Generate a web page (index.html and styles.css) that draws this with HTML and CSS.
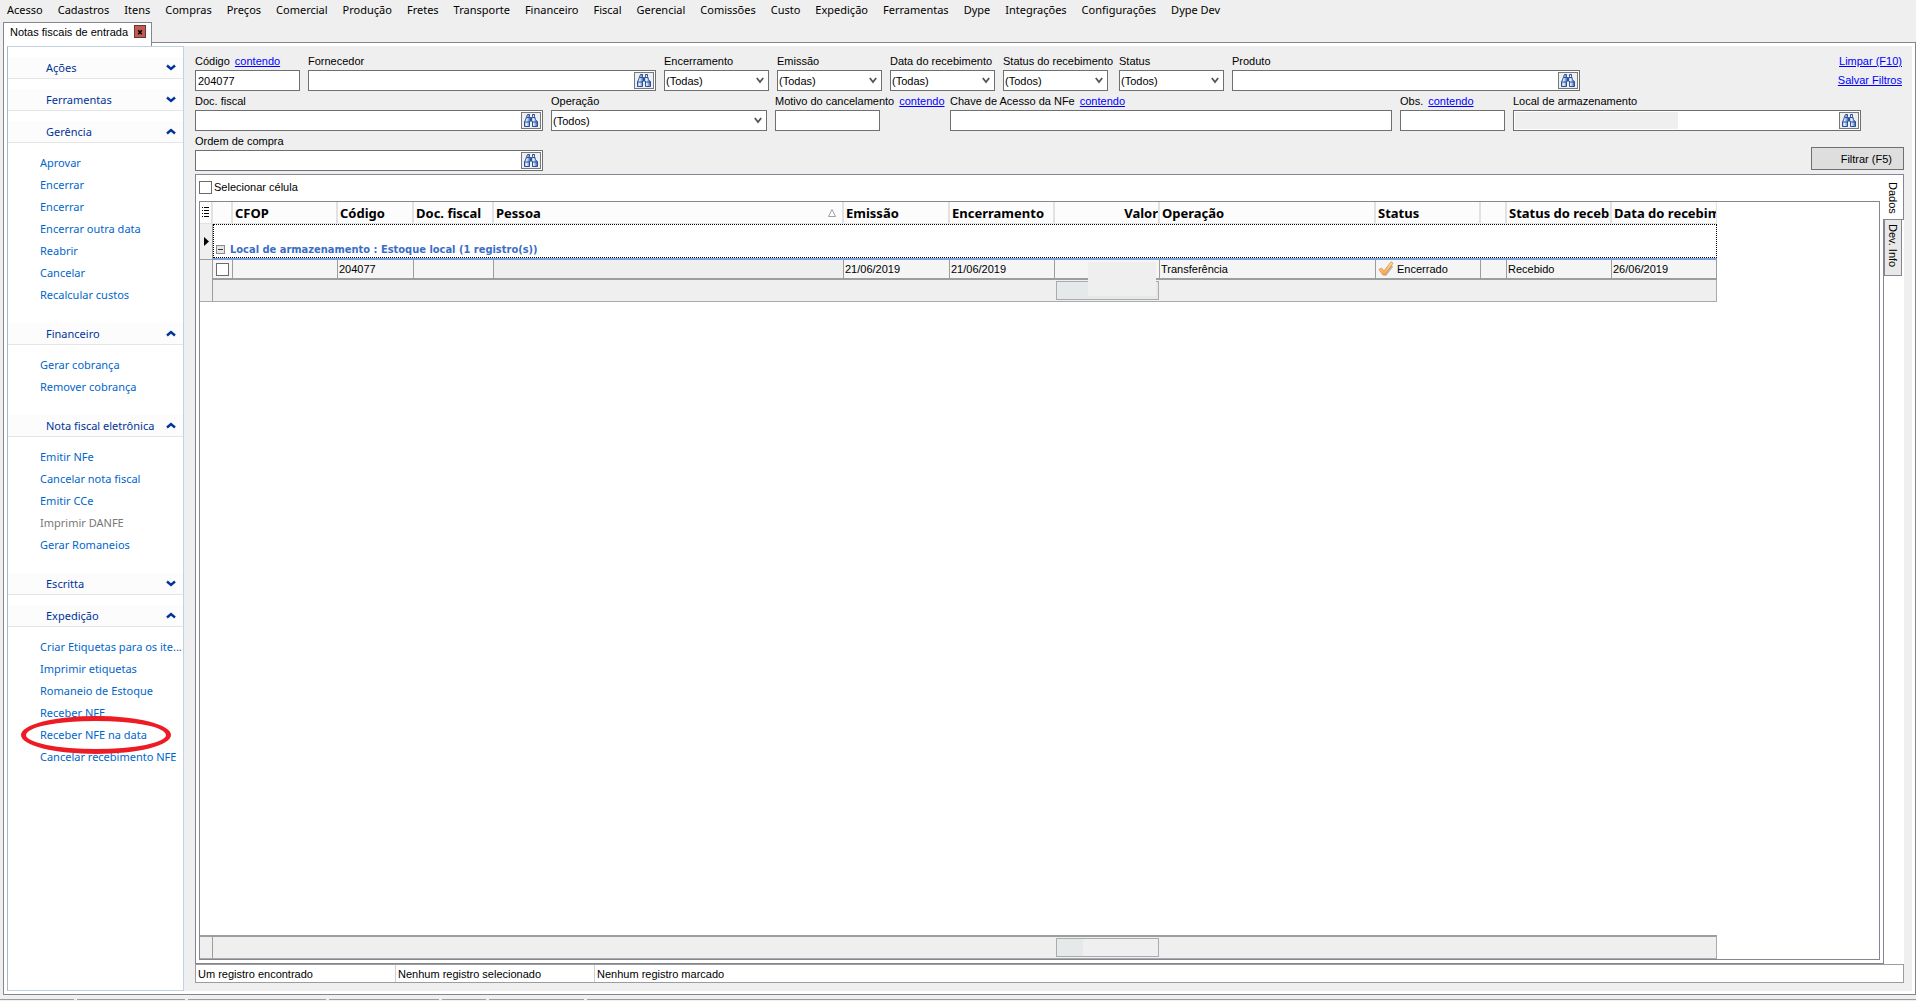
FILE: index.html
```html
<!DOCTYPE html>
<html lang="pt-BR">
<head>
<meta charset="utf-8">
<title>Notas fiscais de entrada</title>
<link rel="stylesheet" href="styles.css">
</head>
<body>
<svg class="defs" aria-hidden="true">
  <defs>
    <linearGradient id="lens" x1="0" x2="1"><stop offset="0" stop-color="#8fb0e0"/><stop offset=".35" stop-color="#e8f1fc"/><stop offset="1" stop-color="#2f5cab"/></linearGradient>
    <linearGradient id="gold" x1="0" y1="0" x2="0" y2="1"><stop offset="0" stop-color="#ffe2a8"/><stop offset="1" stop-color="#f9a24a"/></linearGradient>
  </defs>
  <symbol id="binoculars" viewBox="0 0 16 15">
    <path d="M6 5.500h4v3H6z" fill="#2a4b8d"/>
    <path d="M4.500 1.500h2v2l1 1v3l-1 1v5h-5v-5l1-1.500 1-3z" fill="url(#lens)" stroke="#29509b"/>
    <path d="M9.500 1.500h2v2l1 3 1 1.500 1 .5v5h-5v-5l-1-1v-3l1-1z" fill="url(#lens)" stroke="#29509b"/>
    <path d="M4 4.500h3M9 4.500h3M2 9h5M9 9h5" stroke="#29509b" fill="none"/>
  </symbol>
  <symbol id="down" viewBox="0 0 10 7"><path d="M1 1.500l4 3.500 4-3.500" fill="none" stroke="currentColor" stroke-width="2.400"/></symbol>
  <symbol id="up" viewBox="0 0 10 7"><path d="M1 5.500l4-3.500 4 3.500" fill="none" stroke="currentColor" stroke-width="2.400"/></symbol>
  <symbol id="arrow" viewBox="0 0 8 7"><path d="M.8 1l3.200 4 3.200-4" fill="none" stroke="#555" stroke-width="1.800"/></symbol>
</svg>

<nav class="menu">
  <a href="#">Acesso</a><a href="#">Cadastros</a><a href="#">Itens</a><a href="#">Compras</a><a href="#">Preços</a><a href="#">Comercial</a><a href="#">Produção</a><a href="#">Fretes</a><a href="#">Transporte</a><a href="#">Financeiro</a><a href="#">Fiscal</a><a href="#">Gerencial</a><a href="#">Comissões</a><a href="#">Custo</a><a href="#">Expedição</a><a href="#">Ferramentas</a><a href="#">Dype</a><a href="#">Integrações</a><a href="#">Configurações</a><a href="#">Dype Dev</a>
</nav>

<div class="tabs">
  <div class="tab">Notas fiscais de entrada <button class="close" aria-label="Fechar"><svg viewBox="0 0 11 11"><path d="M3.500 3.500l4 4.500M7.500 3.500l-4 4.500" stroke="#000" stroke-width="1.600"/></svg></button></div>
</div>

<div class="pane">
  <aside class="side">
    <section><button class="head">Ações<svg><use href="#down"/></svg></button></section>
    <section><button class="head">Ferramentas<svg><use href="#down"/></svg></button></section>
    <section><button class="head">Gerência<svg><use href="#up"/></svg></button>
      <div class="links"><a href="#">Aprovar</a><a href="#">Encerrar</a><a href="#">Encerrar</a><a href="#">Encerrar outra data</a><a href="#">Reabrir</a><a href="#">Cancelar</a><a href="#">Recalcular custos</a></div></section>
    <section><button class="head">Financeiro<svg><use href="#up"/></svg></button>
      <div class="links"><a href="#">Gerar cobrança</a><a href="#">Remover cobrança</a></div></section>
    <section><button class="head">Nota fiscal eletrônica<svg><use href="#up"/></svg></button>
      <div class="links"><a href="#">Emitir NFe</a><a href="#">Cancelar nota fiscal</a><a href="#">Emitir CCe</a><a href="#" class="off">Imprimir DANFE</a><a href="#">Gerar Romaneios</a></div></section>
    <section><button class="head">Escritta<svg><use href="#down"/></svg></button></section>
    <section><button class="head">Expedição<svg><use href="#up"/></svg></button>
      <div class="links"><a href="#">Criar Etiquetas para os ite...</a><a href="#">Imprimir etiquetas</a><a href="#">Romaneio de Estoque</a><a href="#">Receber NFE</a><a href="#" class="marked">Receber NFE na data<span class="ring"></span></a><a href="#">Cancelar recebimento NFE</a></div></section>
  </aside>

  <main class="work">
    <form class="filters">
      <div class="rows">
        <div class="row">
          <div class="field small"><div class="cap"><label for="cod">Código</label><a href="#">contendo</a></div><input class="box" id="cod" value="204077"></div>
          <div class="field wide"><div class="cap"><label for="forn">Fornecedor</label></div><div class="box"><input id="forn"><button type="button" aria-label="Buscar"><svg><use href="#binoculars"/></svg></button></div></div>
          <div class="field small"><div class="cap"><label for="enc">Encerramento</label></div><div class="box"><select id="enc"><option>(Todas)</option></select><svg class="arrow"><use href="#arrow"/></svg></div></div>
          <div class="field small"><div class="cap"><label for="emi">Emissão</label></div><div class="box"><select id="emi"><option>(Todas)</option></select><svg class="arrow"><use href="#arrow"/></svg></div></div>
          <div class="field small"><div class="cap"><label for="rec">Data do recebimento</label></div><div class="box"><select id="rec"><option>(Todas)</option></select><svg class="arrow"><use href="#arrow"/></svg></div></div>
          <div class="field small long-cap"><div class="cap"><label for="srec">Status do recebimento</label></div><div class="box"><select id="srec"><option>(Todos)</option></select><svg class="arrow"><use href="#arrow"/></svg></div></div>
          <div class="field small"><div class="cap"><label for="sta">Status</label></div><div class="box"><select id="sta"><option>(Todos)</option></select><svg class="arrow"><use href="#arrow"/></svg></div></div>
          <div class="field wide"><div class="cap"><label for="prod">Produto</label></div><div class="box"><input id="prod"><button type="button" aria-label="Buscar"><svg><use href="#binoculars"/></svg></button></div></div>
        </div>
        <div class="row">
          <div class="field wide"><div class="cap"><label for="doc">Doc. fiscal</label></div><div class="box"><input id="doc"><button type="button" aria-label="Buscar"><svg><use href="#binoculars"/></svg></button></div></div>
          <div class="field mid"><div class="cap"><label for="ope">Operação</label></div><div class="box"><select id="ope"><option>(Todos)</option></select><svg class="arrow"><use href="#arrow"/></svg></div></div>
          <div class="field small linked-cap"><div class="cap"><label for="mot">Motivo do cancelamento</label><a href="#">contendo</a></div><input class="box" id="mot"></div>
          <div class="field key"><div class="cap"><label for="cha">Chave de Acesso da NFe</label><a href="#">contendo</a></div><input class="box" id="cha"></div>
          <div class="field small"><div class="cap"><label for="obs">Obs.</label><a href="#">contendo</a></div><input class="box" id="obs"></div>
          <div class="field wide"><div class="cap"><label for="loc">Local de armazenamento</label></div><div class="box"><span class="filled"></span><input id="loc"><button type="button" aria-label="Buscar"><svg><use href="#binoculars"/></svg></button></div></div>
        </div>
        <div class="row">
          <div class="field wide"><div class="cap"><label for="ord">Ordem de compra</label></div><div class="box"><input id="ord"><button type="button" aria-label="Buscar"><svg><use href="#binoculars"/></svg></button></div></div>
        </div>
      </div>
      <div class="actions">
        <a href="#">Limpar (F10)</a>
        <a href="#">Salvar Filtros</a>
        <button type="button" class="filter">Filtrar (F5)</button>
      </div>
    </form>

    <div class="result">
      <div class="sheet">
        <label class="pick"><input type="checkbox"> Selecionar célula</label>
        <div class="grid">
          <table class="data">
            <colgroup><col class="c13"><col class="c20"><col class="c105"><col class="c76"><col class="c80"><col class="c350"><col class="c106"><col class="c105"><col class="c105"><col class="c216"><col class="c105"><col class="c26"><col class="c105"><col class="c105"></colgroup>
            <thead><tr>
              <th><svg class="list" viewBox="0 0 7 11"><path d="M2 .5h5M2 3.500h5M2 6.500h5M2 9.500h5M0 .5h1M0 3.500h1M0 6.500h1M0 9.500h1" stroke="#000"/></svg></th>
              <th></th><th>CFOP</th><th>Código</th><th>Doc. fiscal</th>
              <th><div class="sorted">Pessoa<svg viewBox="0 0 8 8"><path d="M4 .5L7.500 7.500H.5z" fill="none" stroke="#a0a0a0"/></svg></div></th>
              <th>Emissão</th><th>Encerramento</th><th class="num">Valor</th><th>Operação</th><th>Status</th><th></th><th>Status do recebimento</th><th>Data do recebimento</th>
            </tr></thead>
            <tbody>
              <tr class="group"><td class="mark"><svg viewBox="0 0 5 9"><path d="M0 0l5 4.500L0 9z"/></svg></td><td colspan="13"><div class="band"><button class="fold" aria-label="Recolher"></button>Local de armazenamento : Estoque local (1 registro(s))</div></td></tr>
              <tr class="item"><td class="mark"></td><td class="tick"><input type="checkbox" aria-label="Marcar"></td><td></td><td>204077</td><td></td><td class="dim"></td><td>21/06/2019</td><td>21/06/2019</td><td class="value"><span class="cover"></span></td><td>Transferência</td>
                <td><div class="state"><svg viewBox="0 0 16 16"><path d="M4 13l4 2 7-9-1-2z" fill="#b9b9b9"/><path d="M1 8.500L3.500 7l2.500 3L13 .8l2 1.400L7 14H5z" fill="url(#gold)" stroke="#e08a3c" stroke-width=".8"/></svg>Encerrado</div></td><td></td><td>Recebido</td><td>26/06/2019</td></tr>
            </tbody>
            <tfoot><tr><td class="mark"></td><td colspan="7"></td><td class="sum"><div></div></td><td colspan="5"></td></tr></tfoot>
          </table>
          <table class="data totals">
            <colgroup><col class="c13"><col class="c842"><col class="c105"><col class="c557"></colgroup>
            <tfoot><tr><td class="mark"></td><td></td><td class="sum"><div class="part"></div></td><td></td></tr></tfoot>
          </table>
        </div>
      </div>
      <div class="sidetabs"><button class="on">Dados</button><button>Dev. Info</button></div>
    </div>
    <div class="status"><span>Um registro encontrado</span><span>Nenhum registro selecionado</span><span>Nenhum registro marcado</span></div>
  </main>
</div>
<footer class="panels"><i class="p74"></i><i class="p108"></i><i class="p138"></i><i class="p110"></i><i class="p44"></i><i class="p95"></i><i class="rest"></i></footer>
</body>
</html>
```
FILE: styles.css
```css
* { box-sizing: border-box; }

body {
  margin: 0;
  height: 100vh;
  display: flex;
  flex-direction: column;
  background: #efefef;
  color: #000;
  font: 11px/16px "Liberation Sans", Arial, sans-serif;
  overflow: hidden;
}

button, input, select {
  font: inherit;
  color: inherit;
  margin: 0;
  padding: 0;
  border: 0;
  border-radius: 0;
  background: none;
}

svg { display: block; }
.defs { position: absolute; width: 0; height: 0; }
input:focus, select:focus { outline: 0; }

/* Menu bar and document tabs */
.menu {
  display: flex;
  gap: 15px;
  height: 22px;
  padding: 2px 7px;
  font: 11px/16px "Noto Sans", "Segoe UI", sans-serif;
  white-space: nowrap;
}
.menu a { color: #000; text-decoration: none; }

.tabs { padding-left: 3px; display: flex; height: 20px; }
.tab {
  display: flex;
  align-items: center;
  justify-content: space-between;
  gap: 6px;
  width: 149px;
  height: 24px;
  padding: 0 5px 6px 6px;
  border: 1px solid #868692;
  border-bottom: 0;
  background: #fff;
  white-space: nowrap;
  z-index: 1;
}
.close { width: 13px; height: 13px; border: 1px solid #5e3d38; background: #c65a50; }

.pane {
  flex: 1;
  min-height: 0;
  display: flex;
  margin-left: 3px;
  border: 1px solid #868692;
  padding: 3px;
  background: #efefef;
  box-shadow: inset 0 0 0 3px #fff;
}

/* Task sidebar */
.side {
  flex: none;
  width: 177px;
  padding-top: 10px;
  border: 1px solid #c3d2de;
  border-left-color: #a9b8c6;
  background: #fff;
  font: 11px/22px "Noto Sans", "Segoe UI", sans-serif;
  white-space: nowrap;
}
.side section { margin-bottom: 10px; }
.head {
  display: flex;
  align-items: center;
  justify-content: space-between;
  width: 100%;
  height: 22px;
  padding: 0 7px 0 38px;
  border-bottom: 1px solid #e5e5e5;
  background: #fcfcfc;
  color: #003399;
}
.head svg { width: 10px; height: 7px; }
.links { padding: 9px 0 7px 32px; }
.links a { display: block; height: 22px; color: #0066cc; text-decoration: none; }
.links .off { color: #777; }
.marked { position: relative; }
.ring {
  position: absolute;
  left: -19px;
  top: -8px;
  width: 150px;
  height: 38px;
  border: 5px solid #ed1c24;
  border-radius: 50%;
}

/* Filters */
.work { flex: 1; min-width: 0; display: flex; flex-direction: column; padding: 7px 8px 8px 11px; }
.filters { display: flex; height: 121px; }
.rows { flex: 1; min-width: 0; display: flex; flex-direction: column; gap: 2px; }
.row { display: flex; gap: 8px; }
.field { flex: none; }
.cap { display: flex; gap: 5px; height: 17px; white-space: nowrap; }
.cap a, .actions a { color: #0000ff; }
.box {
  display: flex;
  align-items: center;
  position: relative;
  width: 100%;
  height: 21px;
  border: 1px solid #6f6f6f;
  background: #fff;
}
input.box { display: block; padding: 0 2px; }
.small { width: 105px; }
.small .box { width: 105px; }
.long-cap { width: 108px; }
.linked-cap { width: 167px; }
.wide { width: 348px; }
.mid { width: 216px; }
.key { width: 442px; }
.box > input { flex: 1; min-width: 0; height: 17px; padding: 0 2px; }
.box > button {
  display: grid;
  place-items: center;
  width: 20px;
  height: 17px;
  margin-right: 1px;
  border: 1px solid #77777f;
  background: #efefef;
}
.box > button svg { width: 16px; height: 15px; }
.box select { flex: 1; height: 19px; padding: 0 1px; appearance: none; }
.arrow { width: 8px; height: 7px; position: absolute; right: 4px; top: 6px; pointer-events: none; }
.filled { width: 163px; height: 17px; margin-left: 1px; background: #efefef; }
.actions { flex: none; display: flex; flex-direction: column; align-items: flex-end; gap: 3px; }
.actions a { margin-right: 2px; }
.filter {
  width: 93px;
  height: 23px;
  margin-top: 56px;
  padding-right: 11px;
  border: 1px solid #707070;
  background: #dedede;
  text-align: right;
}

/* Result sheet */
.result { flex: 1; min-height: 0; display: flex; background: #fff; }
.sheet {
  flex: 1;
  min-width: 0;
  display: flex;
  flex-direction: column;
  padding: 0 3px 3px;
  border: 1px solid #868692;
}
.pick { display: flex; align-items: center; gap: 2px; height: 26px; padding-bottom: 2px; }
input[type="checkbox"] { appearance: none; width: 13px; height: 13px; border: 1px solid #6b6b6b; background: #fff; }
.grid {
  flex: 1;
  display: flex;
  flex-direction: column;
  justify-content: space-between;
  overflow: hidden;
  border: 1px solid #868692;
}
.data { width: 1517px; table-layout: fixed; border-collapse: separate; border-spacing: 0; }
.c13 { width: 13px; }
.c20 { width: 20px; }
.c26 { width: 26px; }
.c76 { width: 76px; }
.c80 { width: 80px; }
.c105 { width: 105px; }
.c106 { width: 106px; }
.c216 { width: 216px; }
.c350 { width: 350px; }
.c842 { width: 842px; }
.c557 { width: 557px; }
.data th {
  height: 22px;
  padding: 0 2px;
  border-right: 2px solid #e2e2e2;
  border-bottom: 1px solid #e2e2e2;
  background: #fcfcfc;
  font: bold 13px/20px "Noto Sans", Tahoma, sans-serif;
  text-align: left;
  white-space: nowrap;
  overflow: hidden;
}
.data th:last-child { border-right-width: 1px; }
.data th.num { padding-right: 0; text-align: right; }
.list { width: 7px; height: 11px; }
.sorted { display: flex; align-items: center; justify-content: space-between; padding-right: 4px; }
.sorted svg { width: 8px; height: 8px; }
.data td { padding: 0 1px; white-space: nowrap; }
.data .mark { border-right: 1px solid #9d9d9d; background: #efefef; }
.group td { height: 36px; border-bottom: 2px solid #7a9fdb; }
.group td:last-child { padding: 0; }
.group .mark { padding-left: 4px; border-bottom: 1px solid #9d9d9d; }
.mark svg { width: 5px; height: 9px; }
.band {
  display: flex;
  align-items: flex-end;
  gap: 5px;
  height: 34px;
  padding-left: 2px;
  border: 1px dotted #000;
  color: #3a6dc4;
  font: bold 11px/14px "DejaVu Sans Condensed", Tahoma, sans-serif;
}
.fold {
  width: 9px;
  height: 9px;
  margin-bottom: 3px;
  border: 1px solid #8a8a8a;
  background: linear-gradient(#333, #333) center / 5px 1px no-repeat #e6e6e6;
}
.item td { height: 20px; border-right: 1px solid #9d9d9d; border-bottom: 2px solid #9d9d9d; background: #f5f5f5; }
.item .mark { border-bottom: 0; }
.item .dim { background: #efefef; }
.item .tick { padding-left: 3px; }
.tick input { display: block; }
.value { position: relative; }
.cover { position: absolute; left: 33px; top: 2px; width: 68px; height: 34px; background: #efefef; z-index: 1; }
.state { display: flex; align-items: center; gap: 3px; padding-left: 1px; }
.state svg { width: 16px; height: 16px; }
.data tfoot td { height: 22px; border-bottom: 1px solid #aaa; background: #efefef; }
.data tfoot td:last-child { border-right: 1px solid #aaa; }
.data tfoot .sum { padding: 0 1px; }
.sum div { height: 19px; border: 1px solid #a8acac; background: #e5e9ea; }
.sum .part { background: linear-gradient(90deg, #e5e9ea 26px, #efefef 26px); }
.totals { flex: none; }
.totals td { border-top: 2px solid #9d9d9d; }
.data.totals td { height: 24px; }

.sidetabs { flex: none; width: 21px; margin-left: -1px; }
.sidetabs button {
  display: block;
  writing-mode: vertical-rl;
  width: 18px;
  height: 56px;
  margin-left: 1px;
  padding-top: 4px;
  border: 1px solid #868692;
  border-top: 0;
  background: #e8e8e8;
  text-align: left;
}
.sidetabs .on {
  width: 21px;
  height: 46px;
  margin-left: 0;
  padding-top: 7px;
  border-top: 1px solid #868692;
  border-left: 0;
  background: #fff;
}

.status {
  display: flex;
  flex: none;
  height: 19px;
  border: 1px solid #9d9d9d;
  background: #fff;
  line-height: 18px;
}
.status span { width: 199px; padding-left: 2px; }
.status span + span { border-left: 1px solid #d0d0d0; }

/* Window status panels */
.panels { flex: none; display: flex; gap: 3px; height: 6px; padding-top: 4px; }
.panels i { border-top: 1px solid #9d9d9d; }
.p74 { width: 74px; }
.p108 { width: 108px; }
.p138 { width: 138px; }
.p110 { width: 110px; }
.p44 { width: 44px; }
.p95 { width: 95px; }
.rest { flex: 1; }
```
